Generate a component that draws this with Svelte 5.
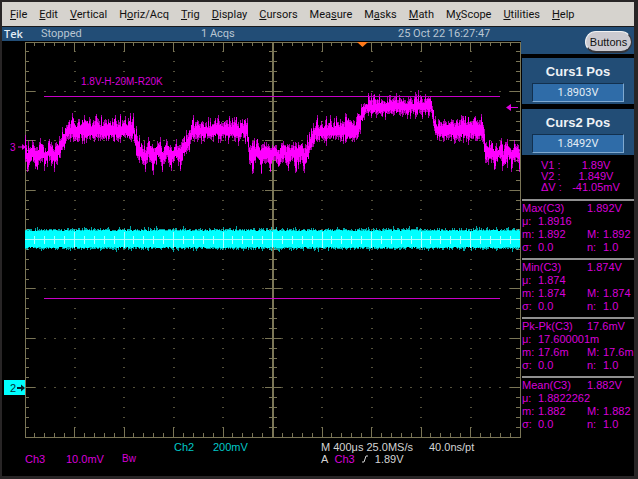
<script>
  const menus = [
    ["", "F", "ile"],
    ["", "E", "dit"],
    ["", "V", "ertical"],
    ["H", "o", "riz/Acq"],
    ["", "T", "rig"],
    ["", "D", "isplay"],
    ["", "C", "ursors"],
    ["Mea", "s", "ure"],
    ["M", "a", "sks"],
    ["", "M", "ath"],
    ["M", "y", "Scope"],
    ["", "U", "tilities"],
    ["", "H", "elp"],
  ];

  let cursors = [
    { id: "curs1", label: "Curs1 Pos", value: "1.8903V" },
    { id: "curs2", label: "Curs2 Pos", value: "1.8492V" },
  ];

  const deltas = [
    ["V1 :", "1.89V"],
    ["V2 :", "1.849V"],
    ["ΔV :", "-41.05mV"],
  ];

  const measurements = [
    { name: "Max(C3)", value: "1.892V", mean: "1.8916", min: "1.892", max: "1.892", sigma: "0.0", n: "1.0" },
    { name: "Min(C3)", value: "1.874V", mean: "1.874", min: "1.874", max: "1.874", sigma: "0.0", n: "1.0" },
    { name: "Pk-Pk(C3)", value: "17.6mV", mean: "17.600001m", min: "17.6m", max: "17.6m", sigma: "0.0", n: "1.0" },
    { name: "Mean(C3)", value: "1.882V", mean: "1.8822262", min: "1.882", max: "1.882", sigma: "0.0", n: "1.0" },
  ];

  // Graticule: 10 x 8 divisions, 5 minor steps each
  const X0 = 23;
  const Y0 = 1;
  const W = 495;
  const H = 395;
  const CX = X0 + W / 2;
  const CY = Y0 + H / 2;

  function buildGrid() {
    let ticks = "";
    let dots = "";
    for (let i = 1; i < 50; i++) {
      const x = X0 + (W * i) / 50;
      const major = i % 5 === 0;
      const len = major ? 10 : 4;
      ticks += `M${x} ${Y0}v${len}M${x} ${Y0 + H}v${-len}`;
      for (let r = 1; r < 8; r++) {
        if (r !== 4) dots += `M${x - 1} ${Y0 + (H * r) / 8}h2`;
      }
    }
    for (let j = 1; j < 40; j++) {
      const y = Y0 + (H * j) / 40;
      const major = j % 5 === 0;
      const len = major ? 10 : 4;
      const half = major ? 8 : 4;
      ticks += `M${X0} ${y}h${len}M${X0 + W} ${y}h${-len}M${CX - half} ${y}h${half * 2}`;
      for (let c = 1; c < 10; c++) {
        if (c !== 5) dots += `M${X0 + (W * c) / 10 - 1} ${y}h2`;
      }
    }
    return { ticks, dots };
  }

  let seed = 7;
  function rand() {
    seed = (seed * 16807) % 2147483647;
    return seed / 2147483647;
  }

  // Channel 3 envelope: [x, top, bottom]
  const envelope = [
    [23, 104, 121], [56, 104, 121], [61, 92, 108], [64, 82, 99], [70, 80, 97],
    [131, 80, 97], [134, 92, 112], [137, 104, 121], [180, 104, 120], [186, 92, 108],
    [190, 81, 97], [245, 81, 97], [247, 104, 121], [304, 105, 122], [309, 92, 108],
    [313, 82, 99], [355, 80, 97], [359, 66, 82], [364, 58, 73], [429, 57, 72],
    [432, 74, 90], [434, 80, 97], [480, 80, 97], [483, 98, 114], [486, 105, 121], [518, 105, 120],
  ];

  function levelAt(x) {
    for (let i = 1; i < envelope.length; i++) {
      const a = envelope[i - 1];
      const b = envelope[i];
      if (x <= b[0]) {
        const t = (x - a[0]) / (b[0] - a[0]);
        return [a[1] + (b[1] - a[1]) * t, a[2] + (b[2] - a[2]) * t];
      }
    }
    return [105, 120];
  }

  function buildCh3() {
    let core = "";
    let edge = "";
    for (let x = X0; x < X0 + W; x++) {
      let [top, bottom] = levelAt(x);
      const low = top > 100;
      const wave = Math.sin((x * 2 * Math.PI) / 8.3 + Math.sin(x / 17));
      top += (low ? wave * 3 : 0) + rand() * 6 - (rand() > 0.8 ? 5 : 0);
      bottom += (low ? wave * 3 : 0) - rand() * 5 + (rand() > 0.85 ? 4 : 0);
      if (low && wave > 0.7 && rand() > 0.5) bottom += 6;
      top = Math.round(top);
      bottom = Math.round(bottom);
      const up = Math.round(rand() * 5);
      const down = Math.round(rand() * 5);
      core += `M${x + 0.5} ${top}V${bottom}`;
      edge += `M${x + 0.5} ${top - up}V${bottom + down}`;
    }
    return { core, edge };
  }

  function buildCh2() {
    let core = "";
    let edge = "";
    for (let x = X0; x < X0 + W; x++) {
      const top = 190 - Math.round(rand());
      const bottom = 206 + Math.round(rand());
      const up = Math.round(rand() * 2) + (rand() > 0.9 ? 2 : 0);
      const down = Math.round(rand() * 2) + (rand() > 0.9 ? 2 : 0);
      core += `M${x + 0.5} ${top}V${bottom}`;
      edge += `M${x + 0.5} ${top - up}V${bottom + down}`;
    }
    return { core, edge };
  }

  const grid = buildGrid();
  const ch3 = buildCh3();
  const ch2 = buildCh2();

  // Centre axis ticks seen through the channel 2 trace
  const axisTicks = Array.from({ length: 49 }, (_, i) => {
    const half = (i + 1) % 5 === 0 ? 8 : 4;
    return `M${X0 + (W * (i + 1)) / 50} ${CY - half}v${half * 2}`;
  }).join("");
</script>

<div class="scope">
  <nav class="menubar">
    {#each menus as [before, key, after]}
      <button type="button">{before}<u>{key}</u>{after}</button>
    {/each}
  </nav>

  <div class="body">
    <main>
      <div class="status">
        <strong>Tek</strong>
        <span>Stopped</span>
        <span>1 Acqs</span>
        <span>25 Oct 22 16:27:47</span>
      </div>

      <svg class="screen" viewBox="0 0 519 397" role="img" aria-label="Waveform display">
        <path class="dots" d={grid.dots} />
        <path class="ticks" d={grid.ticks} />
        <rect class="frame" x={X0} y={Y0} width={W} height={H} />
        <path class="axis" d="M{CX} {Y0}V{Y0 + H}M{X0} {CY}H{X0 + W}" />

        <path class="ch3 faint" d={ch3.edge} />
        <path class="ch3" d={ch3.core} />
        <path class="ch2 faint" d={ch2.edge} />
        <path class="ch2" d={ch2.core} />
        <path class="through" d={axisTicks} />
        <path class="through" d="M{X0} {CY}H{X0 + W}" />

        <path class="cursor" d="M42 55.5H498M42 257.5H498" />
        <text class="label" x="79" y="44">1.8V-H-20M-R20K</text>

        <text class="label" x="8" y="110">3</text>
        <path class="mark3" d="M16 105.5h4v-2.5l4 3l-4 3v-2.5h-4z" />
        <path class="mark3" d="M516 66h-7v-3l-5 3.5l5 3.5v-3h7z" />
        <rect class="badge" x="2" y="339" width="21" height="15" />
        <text class="badge-text" x="8" y="351">2</text>
        <path class="badge-arrow" d="M15 346h4v-2.5l4 3.5l-4 3.5v-2.5h-4z" />
        <path class="trigger" d="M355 1h11l-5.5 5z" />
      </svg>

      <div class="readouts">
        <span></span><span></span><span></span>
        <span class="c2">Ch2</span>
        <span class="c2">200mV</span>
        <span>M 400μs 25.0MS/s</span>
        <span>40.0ns/pt</span>
        <span class="c3">Ch3</span>
        <span class="c3">10.0mV</span>
        <span class="c3 bw">B<small>w</small></span>
        <span></span><span></span>
        <span class="source">
          A&nbsp; <span class="c3">Ch3</span>
          <svg class="slope" viewBox="0 0 8 8" aria-hidden="true"><path d="M1 7H3L5 1H7" /></svg>
          1.89V
        </span>
      </div>
    </main>

    <aside>
      <div class="top">
        <button type="button">Buttons</button>
      </div>

      {#each cursors as c (c.id)}
        <div class="knob">
          <label for={c.id}>{c.label}</label>
          <input id={c.id} type="text" bind:value={c.value} />
        </div>
      {/each}

      <dl class="deltas">
        {#each deltas as [name, value]}
          <dt>{name}</dt>
          <dd>{value}</dd>
        {/each}
      </dl>

      {#each measurements as m (m.name)}
        <section>
          <span class="name">{m.name}</span><span class="wide">{m.value}</span>
          <span>μ:</span><span class="rest">{m.mean}</span>
          <span>m:</span><span>{m.min}</span><span>M:</span><span>{m.max}</span>
          <span>σ:</span><span>{m.sigma}</span><span>n:</span><span>{m.n}</span>
        </section>
      {/each}
    </aside>
  </div>
</div>

<style>
  :global(body) {
    background: #282526;
  }

  .scope {
    box-sizing: border-box;
    min-height: 100vh;
    padding: 2px 4px 3px 2px;
    display: flex;
    flex-direction: column;
    font-family: "Liberation Sans", Arial, sans-serif;
    font-size: 11px;
  }

  button {
    font: inherit;
    border: 0;
    margin: 0;
    white-space: nowrap;
  }

  .menubar {
    display: flex;
    gap: 12px;
    height: 24px;
    padding-left: 8px;
    background: #d6d3ce;
    border-bottom: 1px solid #1a1a1c;
    font-family: Roboto, "Open Sans", sans-serif;
  }

  .menubar button {
    padding: 0;
    background: none;
    color: #111;
  }

  .body {
    flex: 1;
    display: grid;
    grid-template-columns: 1fr 113px;
    background: #000;
  }

  .status {
    display: grid;
    grid-template-columns: 37fr 160fr 197fr 123fr;
    padding-left: 2px;
    height: 14px;
    line-height: 14px;
    background: #224d76;
    color: #b9c6d2;
    font-family: Roboto, sans-serif;
    font-size: 11px;
    white-space: nowrap;
  }

  .status strong {
    font-family: "Open Sans", sans-serif;
    font-size: 11px;
    font-weight: 600;
    color: #e4edf5;
  }

  .screen {
    display: block;
    width: 100%;
    height: auto;
  }

  .screen path,
  .screen rect {
    shape-rendering: crispEdges;
  }

  .frame {
    fill: none;
    stroke: #7a7556;
  }

  .ticks {
    stroke: #7a7556;
  }

  .dots {
    stroke: #55523c;
  }

  .axis {
    stroke: #7a7556;
    stroke-width: 2;
  }

  .ch3 {
    stroke: #f0f;
  }

  .ch2 {
    stroke: #0ff;
  }

  .faint {
    opacity: 0.65;
  }

  .through {
    stroke: #a8ffff;
  }

  .cursor {
    stroke: #c800c8;
    stroke-width: 1;
  }

  .label {
    fill: #d800d8;
    font-size: 10px;
  }

  .screen .mark3,
  .screen .badge-arrow,
  .screen .trigger {
    shape-rendering: auto;
  }

  .mark3 {
    fill: #e000e0;
  }

  .badge {
    fill: #0ff;
  }

  .badge-text {
    fill: #003038;
    font-size: 11px;
  }

  .badge-arrow {
    fill: #002028;
  }

  .trigger {
    fill: #ff7a1a;
  }

  .readouts {
    display: grid;
    grid-template-columns: 41fr 56fr 52fr 39fr 108fr 108fr 92fr;
    padding: 3px 0 11px 23px;
    line-height: 12px;
    color: #d4d4d4;
    white-space: nowrap;
  }

  .c2 {
    color: #00c8c8;
  }

  .c3 {
    color: #d800d8;
  }

  .bw {
    font-size: 10px;
  }

  .bw small {
    font-size: 10px;
  }

  .slope {
    width: 8px;
    height: 8px;
    margin: 0 3px;
    fill: none;
    stroke: #d4d4d4;
  }

  aside {
    display: flex;
    flex-direction: column;
    color: #d800d8;
  }

  .top {
    display: flex;
    justify-content: flex-end;
    height: 23px;
    padding: 4px 2px 0 0;
    margin-bottom: 4px;
    background: #224d76;
  }

  .top button {
    width: 47px;
    height: 22px;
    padding: 0;
    border: 1px solid #f2f2f2;
    border-right-color: #33343a;
    border-bottom: 2px solid #33343a;
    border-radius: 12px;
    background: #cbcad0;
    color: #111;
  }

  .knob {
    display: flex;
    flex-direction: column;
    align-items: center;
    gap: 4px;
    margin: 0 0 5px 1px;
    padding: 7px 10px 2px;
    background: #224d76;
  }

  .knob label {
    line-height: 14px;
    font-size: 13px;
    font-weight: bold;
    color: #eef2f5;
  }

  .knob input {
    box-sizing: border-box;
    width: 100%;
    height: 19px;
    padding: 0;
    border: 1px solid #12304e;
    border-right-color: #7fa9d0;
    border-bottom-color: #7fa9d0;
    background: #2f6ca8;
    color: #e2ecf5;
    font-family: Roboto, sans-serif;
    font-size: 11px;
    text-align: center;
  }

  .deltas {
    display: grid;
    grid-template-columns: 24px 62px;
    justify-content: center;
    margin: 0 0 6px;
    padding: 0 0 0 13px;
    line-height: 11px;
    white-space: nowrap;
  }

  .deltas dd {
    margin: 0;
    text-align: center;
  }

  section {
    display: grid;
    grid-template-columns: 16px 49px 16px 1fr;
    margin-left: 1px;
    padding: 1px 0 4px;
    border-top: 2px solid #909090;
    line-height: 13px;
    white-space: nowrap;
  }

  .name,
  .wide {
    grid-column: span 2;
  }

  .rest {
    grid-column: span 3;
  }
</style>
